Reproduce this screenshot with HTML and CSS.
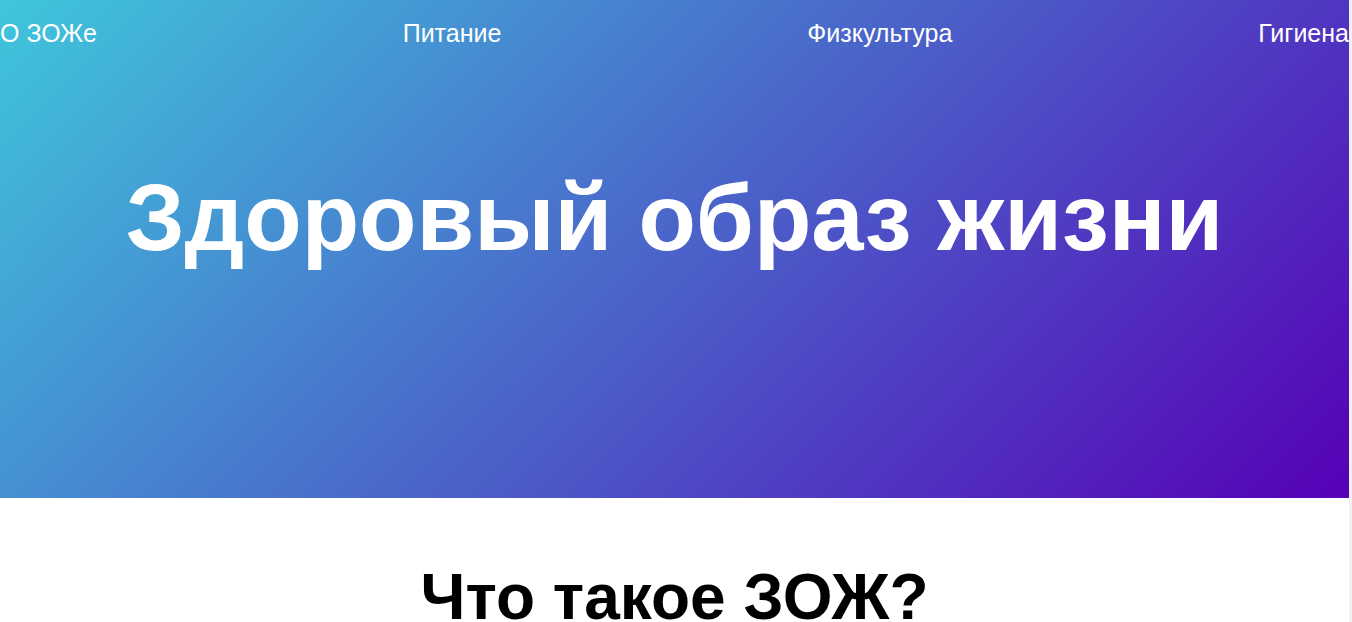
FILE: index.html
```html
<!DOCTYPE html>
<html lang="ru">
<head>
<meta charset="utf-8">
<title>Здоровый образ жизни</title>
<link rel="stylesheet" href="styles.css">
</head>
<body>
<div class="page">
  <header class="hero">
    <nav class="nav">
      <a class="nav-link" href="#">О ЗОЖе</a>
      <a class="nav-link" href="#">Питание</a>
      <a class="nav-link" href="#">Физкультура</a>
      <a class="nav-link" href="#">Гигиена</a>
    </nav>
    <h1 class="hero-title">Здоровый образ жизни</h1>
  </header>
  <main class="content">
    <h2 class="section-title">Что такое ЗОЖ?</h2>
  </main>
</div>
</body>
</html>
```

FILE: styles.css
```css
html, body {
  margin: 0;
  padding: 0;
  height: 100%;
  overflow: hidden;
}
body {
  background: #f1f1f1;
  font-family: "Liberation Sans", Arial, sans-serif;
}
.page {
  width: calc(100% - 3px);
  min-height: 100%;
  background: #fff;
}
.hero {
  height: 498px;
  background: linear-gradient(135deg, #3fc6dc 0%, #5600b6 100%);
  display: flex;
  flex-direction: column;
}
.nav {
  display: flex;
  justify-content: space-between;
  padding-top: 19px;
}
.nav-link {
  color: #fff;
  text-decoration: none;
  font-size: 25px;
  line-height: 29px;
}
.hero-title {
  margin: 0;
  padding-top: 116px;
  text-align: center;
  color: #fff;
  font-size: 94px;
  font-weight: bold;
  line-height: 108px;
}
.content {
  padding-top: 62px;
}
.section-title {
  margin: 0;
  text-align: center;
  font-size: 64px;
  font-weight: bold;
  line-height: 74px;
  color: #000;
}
```
